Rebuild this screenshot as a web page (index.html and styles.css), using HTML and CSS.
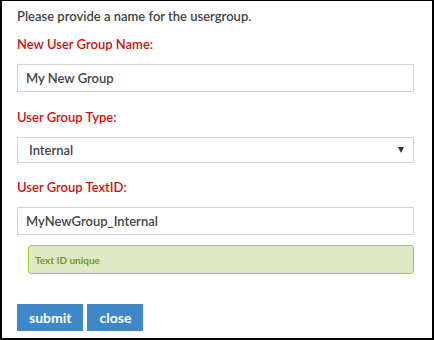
FILE: index.html
```html
<!DOCTYPE html>
<html>
<head>
<meta charset="utf-8">
<link rel="stylesheet" href="styles.css">
</head>
<body>
<div class="dialog">
  <p class="intro">Please provide a name for the usergroup.</p>
  <label class="lbl">New User Group Name:</label>
  <div class="field">My New Group</div>
  <label class="lbl">User Group Type:</label>
  <div class="field select"><span>Internal</span><span class="arrow"></span></div>
  <label class="lbl">User Group TextID:</label>
  <div class="field">MyNewGroup_Internal</div>
  <div class="alert">Text ID unique</div>
  <div class="buttons">
    <button class="btn">submit</button>
    <button class="btn">close</button>
  </div>
</div>
</body>
</html>
```
FILE: styles.css
```css
html, body { margin: 0; padding: 0; background: #fff; }
body { width: 434px; height: 340px; font-family: Lato, "Open Sans", sans-serif; }
.dialog {
  box-sizing: border-box;
  width: 434px; height: 340px;
  border: 1px solid #000;
  border-left-width: 2px;
  border-bottom-width: 2px;
  border-right-width: 2px;
  padding: 7px 18px 0 15px;
  display: flex; flex-direction: column;
}
.intro { margin: 0; font-size: 13px; color: #444; font-weight: 600; line-height: 17px; }
.lbl { display: block; margin-top: 11px; font-size: 13px; color: #cc1111; font-weight: 600; line-height: 17px; }
.field {
  box-sizing: border-box; margin-top: 11px; height: 28px;
  border: 1px solid #d4d4d4; padding: 0 8px;
  font-size: 13px; color: #444; font-weight: 600;
  display: flex; align-items: center;
}
.field + .lbl { margin-top: 17px; }
.select + .lbl { margin-top: 16px; }
.select { height: 26px; padding-left: 11px; justify-content: space-between; }
.arrow { width: 0; height: 0; border-left: 3.5px solid transparent; border-right: 3.5px solid transparent; border-top: 6px solid #333; margin-right: 1px; }
.alert {
  box-sizing: border-box; margin: 10px 0 0 11px; height: 29px;
  background: #dfeac4; border: 1px solid #9ccb3a; border-radius: 3px;
  color: #6e9a22; font-size: 10px; font-weight: 700;
  display: flex; align-items: center; padding-left: 6px;
}
.buttons { display: flex; gap: 4px; margin-top: 30px; }
.btn {
  border: 0; background: #3e88c9; color: #fff;
  font-family: inherit; font-size: 14px; font-weight: 700;
  height: 27px; padding: 0 12px; margin: 0;
}
```
